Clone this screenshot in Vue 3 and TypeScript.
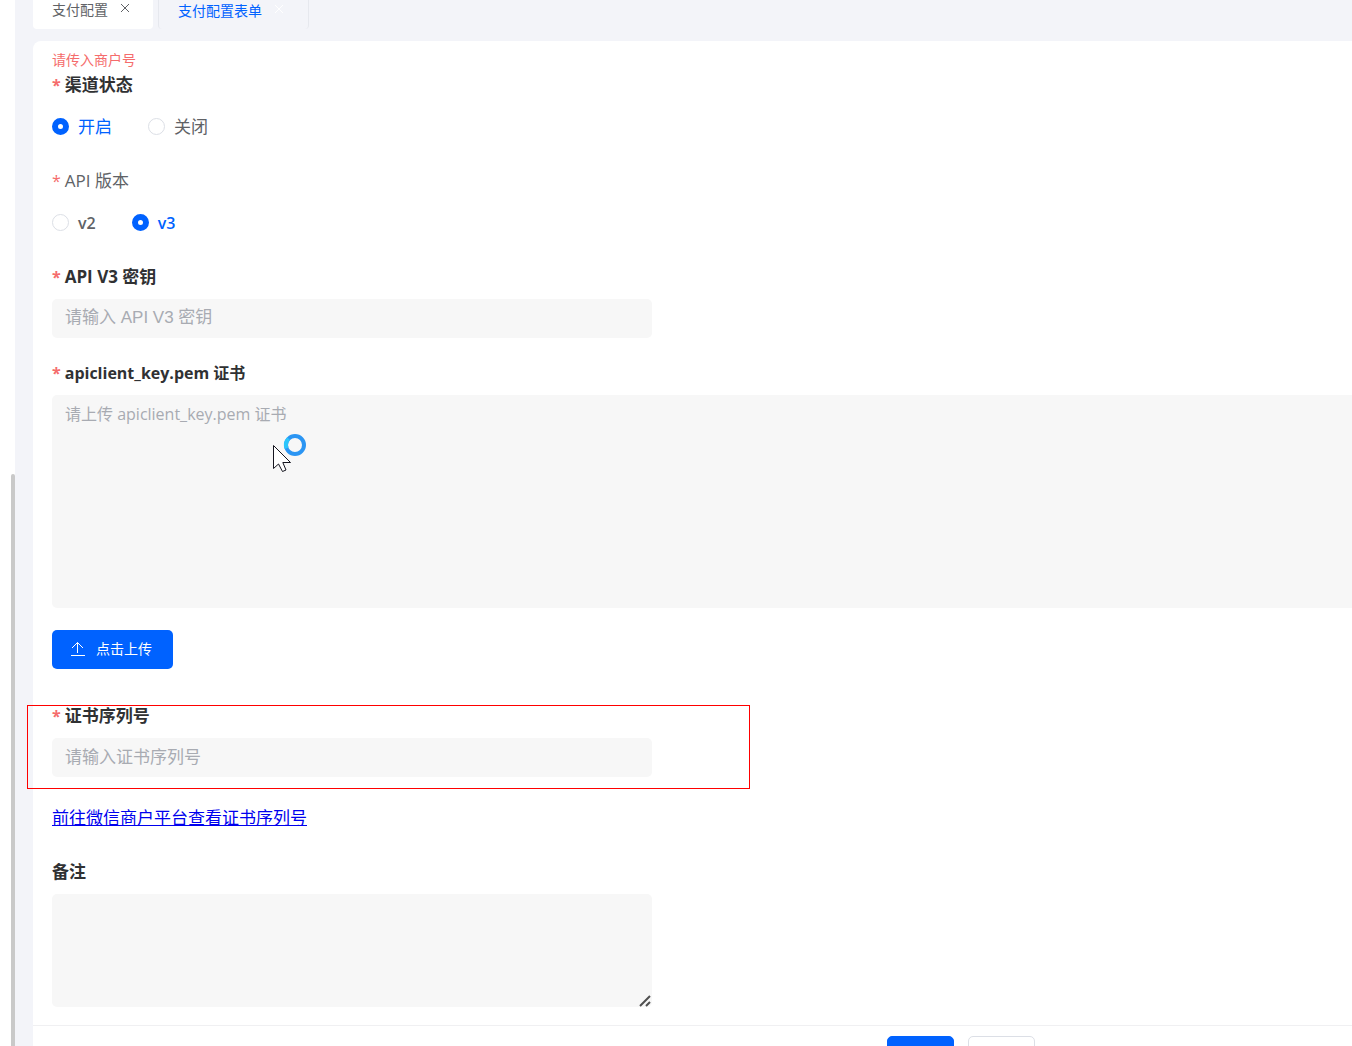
<script setup lang="ts">
import { ref } from 'vue'

const status = ref<'on' | 'off'>('on')
const version = ref<'v2' | 'v3'>('v3')
const apiKey = ref('')
const keyPem = ref('')
const serialNo = ref('')
const remark = ref('')

const statusOptions = [
  { value: 'on', text: '开启' },
  { value: 'off', text: '关闭' },
]
const versionOptions = [
  { value: 'v2', text: 'v2' },
  { value: 'v3', text: 'v3' },
]
</script>

<template>
  <div class="layout">
    <aside class="sidebar"><div class="thumb"></div></aside>
    <main class="main">
      <nav class="tabs">
        <a class="tab tab-plain" href="#config">
          <span>支付配置</span>
          <svg class="close" viewBox="0 0 10 10"><path d="M1 1 9 9M9 1 1 9" /></svg>
        </a>
        <a class="tab tab-current" href="#form">
          <span>支付配置表单</span>
          <svg class="close" viewBox="0 0 10 10"><path d="M1 1 9 9M9 1 1 9" /></svg>
        </a>
      </nav>

      <form class="card" @submit.prevent>
        <div class="fields">
          <p class="error">请传入商户号</p>

          <fieldset class="item">
            <legend class="label required">渠道状态</legend>
            <div class="radios">
              <label v-for="o in statusOptions" :key="o.value" class="radio">
                <input v-model="status" type="radio" name="status" :value="o.value" />
                <span>{{ o.text }}</span>
              </label>
            </div>
          </fieldset>

          <fieldset class="item">
            <legend class="label required light">API 版本</legend>
            <div class="radios">
              <label v-for="o in versionOptions" :key="o.value" class="radio latin">
                <input v-model="version" type="radio" name="version" :value="o.value" />
                <span>{{ o.text }}</span>
              </label>
            </div>
          </fieldset>

          <div class="item">
            <label class="label required" for="api-key">API V3 密钥</label>
            <input id="api-key" v-model="apiKey" class="box arial" type="text" placeholder="请输入 API V3 密钥" />
          </div>

          <div class="item">
            <label class="label required compact" for="key-pem">apiclient_key.pem 证书</label>
            <textarea id="key-pem" v-model="keyPem" class="box pem compact" placeholder="请上传 apiclient_key.pem 证书"></textarea>
            <svg class="pointer" viewBox="0 0 36 42" aria-hidden="true">
              <circle cx="23" cy="13" r="9" fill="#f7f7f7" stroke="#2b95f3" stroke-width="4" />
              <path d="M14.6 16.200A9 9 0 0 1 16.600 6.600" fill="none" stroke="#2bc5fb" stroke-width="4" />
              <path d="M1.500 13.500V36.500L6.500 32L10.500 39.500L14 38L10.800 30.500H18.500Z" fill="#fff" stroke="#15151f" stroke-width="1" />
            </svg>
          </div>

          <button class="upload" type="button">
            <svg viewBox="0 0 16 16" aria-hidden="true"><path d="M1 14.500H15M7.500 12V1.500M2 7 7.500 1.500 13 7" /></svg>
            <span>点击上传</span>
          </button>

          <div class="item serial">
            <label class="label required" for="serial-no">证书序列号</label>
            <input id="serial-no" v-model="serialNo" class="box" type="text" placeholder="请输入证书序列号" />
            <div class="highlight"></div>
          </div>

          <p class="help"><a href="#serial">前往微信商户平台查看证书序列号</a></p>

          <div class="item last">
            <label class="label" for="remark">备注</label>
            <div class="resizable">
              <textarea id="remark" v-model="remark" class="box remark"></textarea>
              <svg class="grip" viewBox="0 0 12 12" aria-hidden="true"><path d="M1 11 11 1M7 11 11 7" /></svg>
            </div>
          </div>
        </div>

        <footer class="footer">
          <button class="action primary" type="submit"></button>
          <button class="action" type="button"></button>
        </footer>
      </form>
    </main>
  </div>
</template>

<style>
body {
  margin: 0;
  background: #f3f4f9;
}
</style>

<style scoped>
.layout {
  display: flex;
  height: 100vh;
  overflow: hidden;
  font-family: "Open Sans", "Noto Sans CJK SC", sans-serif;
  font-size: 17px;
  line-height: 26px;
  color: #606266;
}
.sidebar {
  display: flex;
  flex: none;
  justify-content: flex-end;
  box-sizing: border-box;
  width: 15px;
  padding-top: 474px;
  background: #fff;
}
.thumb {
  width: 4px;
  border-radius: 2px 2px 0 0;
  background: #c9c9c9;
}
.main {
  flex: 1;
  min-width: 0;
  padding-left: 18px;
}
.tabs {
  display: flex;
  gap: 5px;
  height: 29px;
  margin-bottom: 12px;
  font-size: 14px;
}
.tab {
  display: flex;
  align-items: flex-start;
  gap: 12px;
  box-sizing: border-box;
  border-radius: 0 0 4px 4px;
  color: #606266;
  line-height: 20px;
  text-decoration: none;
}
.tab-plain {
  padding: 0 23px 0 19px;
  background: #fff;
}
.tab-current {
  padding: 1px 24px 0 19px;
  border: solid #e6e8ee;
  border-width: 0 1px;
  color: #0062ff;
}
.close {
  width: 10px;
  height: 10px;
  margin-top: 3px;
  fill: none;
  stroke: #606266;
  stroke-width: 1;
}
.tab-current .close {
  stroke: #fff;
}
.card {
  border-top-left-radius: 8px;
  background: #fff;
}
.fields {
  padding: 8px 0 18px 19px;
}
.error {
  margin: 0 0 1px;
  color: #f56c6c;
  font-size: 14px;
  line-height: 22px;
}
.item {
  position: relative;
  min-width: 0;
  margin: 0 0 22px;
  padding: 0;
  border: 0;
}
.item.last {
  margin-bottom: 0;
}
.label {
  display: block;
  height: 26px;
  margin-bottom: 9px;
  padding: 0;
  color: #303133;
  font-weight: 700;
}
.light {
  color: #606266;
  font-weight: 400;
}
.required::before {
  margin-right: 4px;
  color: #f56c6c;
  font-size: 16px;
  content: "*";
}
.radios {
  display: flex;
  align-items: center;
  gap: 36px;
  height: 39px;
}
.radio {
  display: flex;
  align-items: center;
  gap: 9px;
}
.radio input {
  appearance: none;
  box-sizing: border-box;
  width: 17px;
  height: 17px;
  margin: 0;
  border: 1px solid #dcdfe6;
  border-radius: 50%;
  background: #fff;
}
.radio input:checked {
  border: 6px solid #0062ff;
}
.radio input:checked + span {
  color: #0062ff;
}
.latin {
  font-size: 16px;
  font-weight: 600;
}
.box {
  display: block;
  box-sizing: border-box;
  width: 600px;
  max-width: 100%;
  height: 39px;
  margin: 0;
  padding: 0 13px 2px;
  border: 0;
  border-radius: 5px;
  outline: 0;
  background: #f7f7f7;
  color: #606266;
  font: inherit;
}
.arial {
  font-family: "Liberation Sans", "Noto Sans CJK SC", sans-serif;
}
.compact {
  font-size: 16px;
}
.box::placeholder {
  color: #a8abb2;
}
.pem {
  width: 100%;
  height: 213px;
  padding-top: 6px;
  border-radius: 5px 0 0 5px;
  resize: none;
}
.resizable {
  position: relative;
  width: 600px;
  max-width: 100%;
}
.remark {
  height: 113px;
  padding-top: 6px;
  resize: vertical;
}
.remark::-webkit-resizer {
  background: transparent;
}
.grip {
  position: absolute;
  right: 1px;
  bottom: 0;
  width: 12px;
  height: 12px;
  fill: none;
  stroke: #505050;
  stroke-width: 2;
  pointer-events: none;
}
.pointer {
  position: absolute;
  top: 72px;
  left: 220px;
  width: 36px;
  height: 42px;
}
.upload {
  display: flex;
  align-items: center;
  gap: 10px;
  height: 39px;
  margin: 0 0 34px;
  padding: 0 21px 2px 18px;
  border: 0;
  border-radius: 5px;
  background: #0062ff;
  color: #fff;
  font: inherit;
  font-size: 14px;
}
.upload svg {
  width: 16px;
  height: 16px;
  fill: none;
  stroke: #fff;
  stroke-width: 1;
}
.serial {
  margin-bottom: 28px;
}
.highlight {
  position: absolute;
  top: 2px;
  left: -25px;
  box-sizing: border-box;
  width: 723px;
  height: 84px;
  border: 1px solid #f00;
  pointer-events: none;
}
.help {
  margin: 0 0 28px;
}
.help a {
  color: #00e;
}
.footer {
  display: flex;
  justify-content: flex-end;
  gap: 14px;
  padding: 10px 24% 10px 0;
  border-top: 1px solid #f0f0f2;
}
.action {
  width: 67px;
  height: 39px;
  border: 1px solid #dcdfe6;
  border-radius: 5px;
  background: #fff;
}
.primary {
  border-color: #0062ff;
  background: #0062ff;
}
</style>
